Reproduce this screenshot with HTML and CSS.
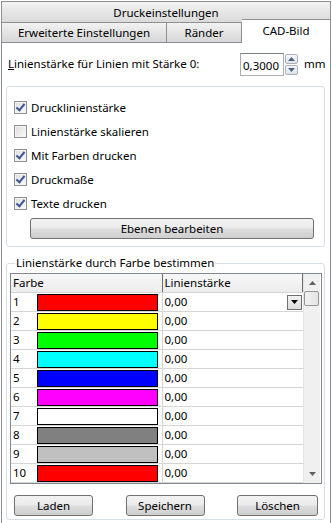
FILE: index.html
```html
<!DOCTYPE html>
<html lang="de">
<head>
  <meta charset="UTF-8">
  <title>Druckeinstellungen</title>
  <link rel="stylesheet" href="styles.css">
</head>
<body>
  <div class="dialog">
    <div class="titlebar">Druckeinstellungen</div>

    <div class="tabs">
      <div class="tab tab--wide">Erweiterte Einstellungen</div>
      <div class="tab tab--mid">Ränder</div>
      <div class="tab tab--active">CAD-Bild</div>
    </div>

    <div class="page">
      <div class="spin-row">
        <span class="spin-label"><u>L</u>inienstärke für Linien mit Stärke 0:</span>
        <div class="spin-box">0,3000</div>
        <div class="spin-btns">
          <div class="spin-btn"><svg width="7" height="4" viewBox="0 0 7 4"><path d="M0 4 L3.5 0 L7 4 Z" fill="#4d6185"/></svg></div>
          <div class="spin-btn"><svg width="7" height="4" viewBox="0 0 7 4"><path d="M0 0 L7 0 L3.5 4 Z" fill="#4d6185"/></svg></div>
        </div>
        <span class="spin-unit">mm</span>
      </div>

      <div class="group">
        <label class="check"><span class="box on"></span>Drucklinienstärke</label>
        <label class="check"><span class="box"></span>Linienstärke skalieren</label>
        <label class="check"><span class="box on"></span>Mit Farben drucken</label>
        <label class="check"><span class="box on"></span>Druckmaße</label>
        <label class="check"><span class="box on"></span>Texte drucken</label>
        <button class="btn btn--wide">Ebenen bearbeiten</button>
      </div>

      <fieldset class="group group--colors">
        <legend>Linienstärke durch Farbe bestimmen</legend>
        <div class="grid">
          <table class="grid-table">
            <thead>
              <tr><th class="col-color">Farbe</th><th class="col-width">Linienstärke</th></tr>
            </thead>
            <tbody>
              <tr><td><div class="color-cell"><span class="num">1</span><span class="swatch" style="background:#ff0000"></span></div></td><td><div class="width-cell">0,00<span class="drop"><svg width="7" height="4" viewBox="0 0 7 4"><path d="M0 0 L7 0 L3.5 4 Z" fill="#000"/></svg></span></div></td></tr>
              <tr><td><div class="color-cell"><span class="num">2</span><span class="swatch" style="background:#ffff00"></span></div></td><td><div class="width-cell">0,00</div></td></tr>
              <tr><td><div class="color-cell"><span class="num">3</span><span class="swatch" style="background:#00ff00"></span></div></td><td><div class="width-cell">0,00</div></td></tr>
              <tr><td><div class="color-cell"><span class="num">4</span><span class="swatch" style="background:#00ffff"></span></div></td><td><div class="width-cell">0,00</div></td></tr>
              <tr><td><div class="color-cell"><span class="num">5</span><span class="swatch" style="background:#0000ff"></span></div></td><td><div class="width-cell">0,00</div></td></tr>
              <tr><td><div class="color-cell"><span class="num">6</span><span class="swatch" style="background:#ff00ff"></span></div></td><td><div class="width-cell">0,00</div></td></tr>
              <tr><td><div class="color-cell"><span class="num">7</span><span class="swatch" style="background:#ffffff"></span></div></td><td><div class="width-cell">0,00</div></td></tr>
              <tr><td><div class="color-cell"><span class="num">8</span><span class="swatch" style="background:#808080"></span></div></td><td><div class="width-cell">0,00</div></td></tr>
              <tr><td><div class="color-cell"><span class="num">9</span><span class="swatch" style="background:#c0c0c0"></span></div></td><td><div class="width-cell">0,00</div></td></tr>
              <tr><td><div class="color-cell"><span class="num">10</span><span class="swatch" style="background:#ff0000"></span></div></td><td><div class="width-cell">0,00</div></td></tr>
            </tbody>
          </table>
          <div class="scrollbar">
            <div class="scroll-arrow"><svg width="7" height="4" viewBox="0 0 7 4"><path d="M0 4 L3.5 0 L7 4 Z" fill="#606060"/></svg></div>
            <div class="scroll-thumb"></div>
            <div class="scroll-track"></div>
            <div class="scroll-arrow"><svg width="7" height="4" viewBox="0 0 7 4"><path d="M0 0 L7 0 L3.5 4 Z" fill="#606060"/></svg></div>
          </div>
        </div>
        <div class="btn-row">
          <button class="btn btn--load">Laden</button>
          <button class="btn btn--save">Speichern</button>
          <button class="btn btn--del">Löschen</button>
        </div>
      </fieldset>
    </div>
  </div>
</body>
</html>
```

FILE: styles.css
```css
* {
  box-sizing: border-box;
}
body {
  margin: 0;
  font-family: "Noto Sans", sans-serif;
  font-size: 11.5px;
  color: #000;
  background: #ffffff;
}
.dialog {
  margin: 1px 0 0 1px;
  width: 330px;
}
.titlebar {
  height: 21px;
  border: 1px solid #8e8f8f;
  border-bottom: none;
  background: linear-gradient(#f3f3f3, #e6e6e6 50%, #dadada);
  text-align: center;
  line-height: 22px;
}
.tabs {
  display: flex;
  align-items: flex-end;
  height: 20px;
}
.tab {
  height: 20px;
  border: 1px solid #8e8f8f;
  border-bottom: none;
  background: linear-gradient(#f2f2f2, #e4e4e4 50%, #d6d6d6);
  text-align: center;
  line-height: 20px;
}
.tab--wide {
  width: 166px;
}
.tab--mid {
  width: 75px;
  border-left: none;
}
.tab--active {
  position: relative;
  z-index: 1;
  width: 89px;
  height: 24px;
  margin-bottom: -1px;
  border-left: none;
  background: #ffffff;
  line-height: 22px;
}
.page {
  border: 1px solid #898c95;
  background: #ffffff;
  padding: 10px 5px 4px 4px;
}
.spin-row {
  display: flex;
  align-items: center;
  height: 23px;
  padding-left: 2px;
}
.spin-label {
  flex: 1;
  margin-top: -2px;
}
.spin-box {
  width: 44px;
  height: 23px;
  border: 1px solid #abadb3;
  border-top-color: #7a7e86;
  padding: 4px 0 0 2px;
}
.spin-btns {
  display: flex;
  flex-direction: column;
  gap: 1px;
  margin-left: 1px;
}
.spin-btn {
  width: 13px;
  height: 10px;
  border: 1px solid #a8b2bf;
  border-radius: 2px;
  background: linear-gradient(#f6f7f9, #dfe3e9);
  display: flex;
  align-items: center;
  justify-content: center;
}
.spin-unit {
  width: 27px;
  margin-top: -3px;
  padding-left: 6px;
}
.group {
  margin: 10px 0 0 0;
  border: 1px solid #d5dfe5;
  border-radius: 3px;
  padding: 8px 7px 7px 7px;
}
.check {
  display: flex;
  align-items: center;
  height: 24px;
}
.box {
  width: 13px;
  height: 13px;
  margin-right: 4px;
  border: 1px solid #8e8f8f;
  background: linear-gradient(135deg, #dcdcdc, #fbfbfb);
  box-shadow: inset 0 0 0 1px #f4f4f4;
  position: relative;
}
.box.on::after {
  content: "";
  position: absolute;
  left: 3px;
  top: 0px;
  width: 3px;
  height: 7px;
  border: solid #3c5894;
  border-width: 0 2px 2px 0;
  transform: rotate(40deg);
}
.btn {
  height: 21px;
  border: 1px solid #707070;
  border-radius: 3px;
  background: linear-gradient(#f2f2f2 0%, #ebebeb 48%, #dddddd 52%, #cfcfcf 100%);
  font-family: inherit;
  font-size: 11.5px;
  color: #000;
  padding: 0;
}
.btn--wide {
  display: block;
  width: 284px;
  margin: 3px 0 0 16px;
}
.group--colors {
  margin-top: 8px;
  padding: 0 2px 3px 3px;
  min-width: 0;
}
.group--colors legend {
  padding: 0 1px;
  margin-left: 5px;
  line-height: 16px;
}
.grid {
  display: flex;
  border: 1px solid #828790;
  margin-top: 2px;
}
.grid-table {
  width: 292px;
  border-collapse: collapse;
  table-layout: fixed;
}
.grid-table th {
  height: 18px;
  padding: 0 0 0 2px;
  font-weight: normal;
  text-align: left;
  background: linear-gradient(#f7f7f7, #ececec);
  border-bottom: 1px solid #d5d5d5;
  border-right: 1px solid #6e6e6e;
  line-height: 16px;
}
.col-color {
  width: 151px;
}
.grid-table td {
  height: 19px;
  padding: 0;
  border-bottom: 1px solid #d5d5d5;
  border-right: 1px solid #d5d5d5;
}
.grid-table td:last-child {
  border-right: none;
}
.color-cell {
  display: flex;
  height: 18px;
  align-items: flex-start;
}
.num {
  width: 26px;
  padding-left: 2px;
  line-height: 18px;
}
.swatch {
  width: 121px;
  height: 17px;
  margin-top: 1px;
  border: 1px solid #000;
}
.width-cell {
  display: flex;
  align-items: center;
  justify-content: space-between;
  height: 18px;
  padding: 0 1px 0 2px;
}
.drop {
  width: 15px;
  height: 15px;
  margin-top: 1px;
  border: 1px solid #707070;
  background: linear-gradient(#f2f2f2, #dcdcdc);
  display: flex;
  align-items: center;
  justify-content: center;
}
.scrollbar {
  width: 17px;
  display: flex;
  flex-direction: column;
  background: #f0f0f0;
  border-left: 1px solid #e3e3e3;
}
.scroll-arrow {
  height: 17px;
  display: flex;
  align-items: center;
  justify-content: center;
}
.scroll-thumb {
  height: 15px;
  margin: 0 1px 0 0;
  border: 1px solid #959595;
  border-radius: 2px;
  background: linear-gradient(90deg, #f2f2f2, #e4e4e4);
}
.scroll-track {
  flex: 1;
}
.btn-row {
  display: flex;
  justify-content: space-between;
  margin-top: 11px;
  padding: 0 4px 0 4px;
}
.btn--load,
.btn--save {
  width: 79px;
}
.btn--del {
  width: 81px;
}
```
